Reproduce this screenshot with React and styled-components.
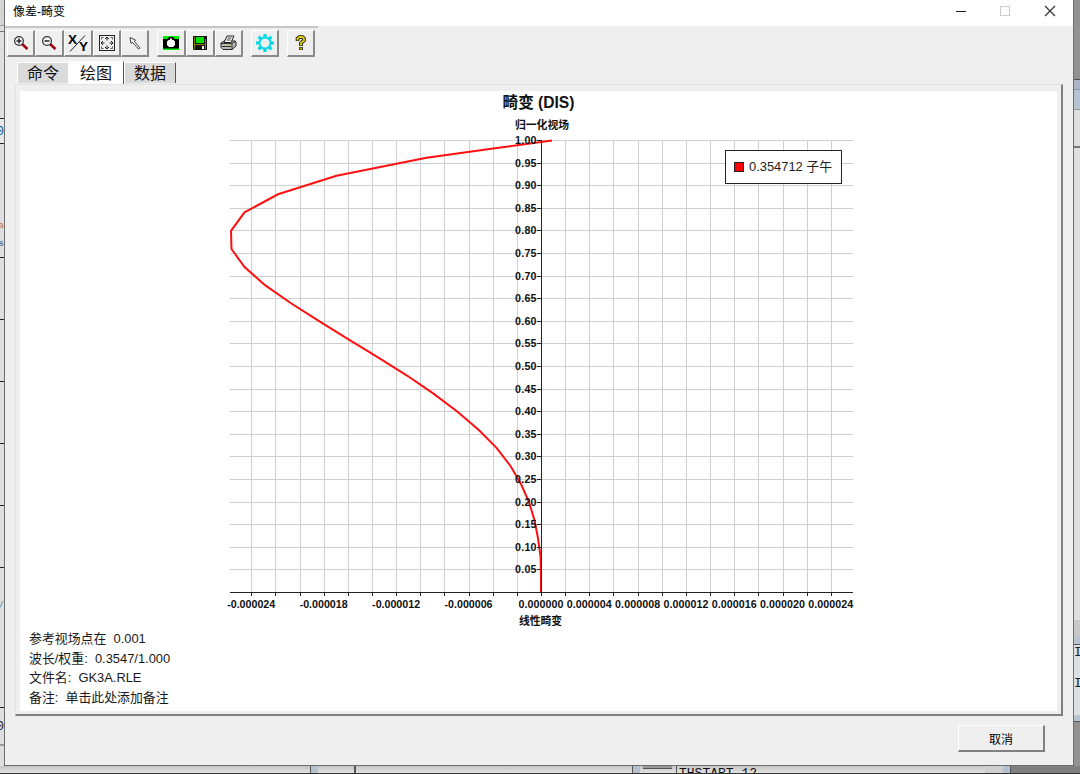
import React from 'react'
import styled, { createGlobalStyle } from 'styled-components'

const GlobalStyle = createGlobalStyle`
  * { box-sizing: border-box; }
  body {
    margin: 0;
    overflow: hidden;
    font-family: 'Liberation Sans', 'Noto Sans CJK SC', sans-serif;
  }
`

const Desktop = styled.div`
  width: 1080px;
  height: 774px;
  display: grid;
  grid-template-columns: 4px 1070px 6px;
  grid-template-rows: 766px 8px;
  background: #e4e4e4;
  overflow: hidden;
`

const Edge = styled.div`
  display: flex;
  flex-direction: column;
  overflow: hidden;
`

const Slice = styled.div`
  flex: none;
  height: ${p => p.h}px;
  background: ${p => p.bg || '#dedfe0'};
  border-bottom: ${p => p.line || 0}px solid ${p => p.lineColor || '#222'};
  color: ${p => p.ink || '#222'};
  font: ${p => p.size || 13}px/${p => p.h}px 'Liberation Mono', monospace;
  display: flex;
  justify-content: ${p => p.align || 'flex-end'};
  white-space: nowrap;
`

const Bottom = styled.div`
  grid-column: 1 / -1;
  display: flex;
  overflow: hidden;
  border-bottom: 1px solid #333;
`

const Strip = styled.div`
  flex: none;
  width: ${p => p.w}px;
  background: ${p => p.bg || 'linear-gradient(#c4c4c4, #e3e3e3)'};
  border-left: ${p => p.line || 0}px solid #555;
  color: #111;
  font: 13px/13px 'Liberation Mono', monospace;
  white-space: pre;
  overflow: hidden;
`

const ScrollThumb = styled.div`
  width: 29px;
  height: 3px;
  margin-left: 3px;
  background: #999;
  border-bottom: 1px solid #555;
`

const Code = styled.div`
  padding: 0 0 0 2px;
  margin-top: 1px;
`

const Window = styled.div`
  display: flex;
  flex-direction: column;
  background: #efefef;
  border: solid #6e6e6e;
  border-width: 0 1px 1px;
`

const TitleBar = styled.div`
  height: 26px;
  flex: none;
  display: flex;
  justify-content: space-between;
  background: #fff;
`

const Title = styled.div`
  padding-left: 8px;
  font-size: 12px;
  line-height: 25px;
  color: #000;
`

const Controls = styled.svg`
  width: 120px;
  height: 26px;
`

const Toolbar = styled.div`
  width: 313px;
  height: 34px;
  flex: none;
  display: flex;
  border-top: 2px solid #c6c6c6;
  padding: 2px 0 0 2px;
`

const Tool = styled.button`
  width: ${p => p.w || 28}px;
  height: 27px;
  margin: 0 ${p => p.gap || 0}px 0 0;
  padding: 0;
  display: flex;
  align-items: center;
  justify-content: center;
  background: #efefef;
  border: solid;
  border-width: 1px 2px 2px 1px;
  border-color: #fff #8a8a8a #8a8a8a #fff;

  svg { flex: none; display: block; }
`

const Tabs = styled.div`
  height: 24px;
  flex: none;
  display: flex;
  align-items: flex-end;
  padding-left: 12px;
`

const Tab = styled.div`
  width: ${p => p.w}px;
  height: ${p => (p.$active ? 23 : 21)}px;
  margin-bottom: ${p => (p.$active ? 0 : 1)}px;
  background: ${p => (p.$active ? '#fff' : '#dadada')};
  border-top: 1px solid #fff;
  border-left: 1px solid #fff;
  border-right: ${p => (p.edge ? 1 : 0)}px solid #555;
  font-size: 16px;
  line-height: ${p => (p.$active ? 23 : 21)}px;
  text-align: center;
  color: #111;
`

const Panel = styled.div`
  width: 1048px;
  height: 632px;
  flex: none;
  margin-left: 10px;
  padding: 6px 4px 3px;
  border: solid;
  border-width: 1px 2px 2px 1px;
  border-color: #e2e2e2 #808080 #808080 #e2e2e2;
`

const Sheet = styled.div`
  height: 620px;
  background: #fff;
  display: flex;
  flex-direction: column;
`

const Chart = styled.svg`
  width: 1039px;
  height: 538px;
  flex: none;
  display: block;
`

const Notes = styled.div`
  padding-left: 9px;
  color: #1a1a1a;
  font-size: 12.9px;
  line-height: 19.7px;
  white-space: pre;
`

const Footer = styled.div`
  flex: 1;
  display: flex;
  justify-content: flex-end;
  padding: 9px 28px 0 0;
`

const Button = styled.button`
  width: 87px;
  height: 27px;
  padding: 0;
  background: #efefef;
  border: solid;
  border-width: 1px 2px 2px 1px;
  border-color: #fff #808080 #808080 #fff;
  font: 12px 'Liberation Sans', 'Noto Sans CJK SC', sans-serif;
  color: #000;
`

const Magnifier = ({ plus }) => (
  <svg width="16" height="16" viewBox="0 0 16 16">
    <path d="M9 9l5.500 5" stroke="#a00012" strokeWidth="2.600" />
    <circle cx="6" cy="6" r="4.400" fill="#f6f6f6" stroke="#333" strokeWidth="1.200" />
    <path d={plus ? 'M3.500 6h5M6 3.500v5' : 'M3.500 6h5'} stroke="#222" strokeWidth="1.500" />
  </svg>
)

const AxisXY = () => (
  <svg width="24" height="22" viewBox="0 0 24 22" fontFamily="Liberation Sans" fontWeight="bold" fontSize="13.500">
    <text x="2" y="11.500">X</text>
    <text x="13" y="19">Y</text>
    <path d="M4 19.500L19 3.500" stroke="#222" strokeWidth="1" />
  </svg>
)

const Fit = () => (
  <svg width="18" height="18" viewBox="0 0 18 18" fill="none" stroke="#222">
    <rect x="1.500" y="1.500" width="15" height="15" />
    <path d="M9 3v3.500M9 11.500v3.500M3 9h3.500M11.500 9h3.500M7 5l2-2 2 2M7 13l2 2 2-2M5 7L3 9l2 2M13 7l2 2-2 2" />
    <path d="M3.500 5.500v-2h2M12.500 3.500h2v2M3.500 12.500v2h2M12.500 14.500h2v-2" strokeWidth="0.700" />
  </svg>
)

const Pointer = () => (
  <svg width="16" height="16" viewBox="0 0 16 16" fill="#eee" stroke="#333" strokeWidth="0.900">
    <path d="M3 2.500l1 6 1.500-1L11.500 14l1.500-1-5.500-6.500L8.500 5z" />
  </svg>
)

const Camera = () => (
  <svg width="16" height="16" viewBox="0 0 16 16">
    <rect y="1" width="16" height="14" fill="#00ef00" />
    <path d="M0 4h4l2-2h4l2 2h4v9.500H0z" fill="#000" />
    <path d="M7 3.500h2v1.500h1.500L12 6.500v3.500L10 12H6L4 10V6.500L5.500 5H7z" fill="#fff" />
  </svg>
)

const Disk = () => (
  <svg width="14" height="14" viewBox="0 0 14 14">
    <path d="M0 0h14v14H1L0 13z" fill="#111" />
    <path d="M3 1h8v6H3z" fill="#00e300" />
    <path d="M1 1h1v12H1zM12 3h1v10h-1zM2 8h10v1H2z" fill="#808000" />
    <path d="M9 10h2v3H9z" fill="#fff" />
  </svg>
)

const Printer = () => (
  <svg width="17" height="16" viewBox="0 0 17 16" stroke="#222">
    <path d="M1 8l3-2h11l1 1v4l-4 3.500H3l-2-2z" fill="#bbb" />
    <path d="M4 7.500L7 1h7l-3 6.500z" fill="#fff" />
    <path d="M7.500 3h4M6.500 5h4M1 8.500h11l4-2.500M12 8.500v6M2 11.500h9" fill="none" strokeWidth="0.900" />
    <path d="M8 10h2" stroke="#cc0" />
  </svg>
)

const Gear = () => (
  <svg width="18" height="18" viewBox="0 0 18 18" fill="none" stroke="#00dcec">
    <circle cx="9" cy="9" r="5.500" strokeWidth="2" />
    <path
      d="M9 0v3M9 15v3M0 9h3M15 9h3M2.600 2.600l2.200 2.200M13.200 13.200l2.200 2.200M2.600 15.400l2.200-2.200M13.200 4.800l2.200-2.200"
      strokeWidth="3.200"
    />
    <circle cx="9" cy="9" r="6.800" stroke="#356a70" strokeWidth="0.400" strokeDasharray="1 4.340" />
  </svg>
)

const Question = () => (
  <svg width="12" height="16" viewBox="0 0 12 16" fill="none">
    <path d="M2.500 6V3.500L4.500 2h3L9 3.500v2L6 8v3M6 12v3" stroke="#111" strokeWidth="3.600" />
    <path d="M2.500 5.500V3.500L4.500 2h3L9 3.500v2L6 8v2.500M6 12.500v2" stroke="#d8cf00" strokeWidth="1.900" />
  </svg>
)

// [distortion in px from the axis, normalised field]
const curve = [
  [10.5, 1], [-52, 0.981], [-115, 0.962], [-205, 0.922], [-263.5, 0.881], [-297, 0.841],
  [-310.5, 0.8], [-310, 0.76], [-297, 0.72], [-276.5, 0.68], [-250.5, 0.64],
  [-222, 0.6], [-193, 0.56], [-163.5, 0.52], [-134.5, 0.48], [-108, 0.44],
  [-84, 0.4], [-63, 0.36], [-45, 0.32], [-31, 0.28], [-20.5, 0.24],
  [-12.5, 0.2], [-7, 0.16], [-3.5, 0.12], [-1, 0.08], [-0.5, 0.04], [-0.5, 0]
]

const STEP_X = 24.15
const X0 = 541.5
const Y0 = 592.5
const toY = v => Y0 - v * 452

const columns = Array.from({ length: 25 }, (_, i) => i - 12)
const rows = Array.from({ length: 20 }, (_, i) => (i + 1) / 20)
const xLabels = [-24, -18, -12, -6, 0, 4, 8, 12, 16, 20, 24]

const Plot = () => (
  <Chart viewBox="20 91 1039 538" fontFamily="'Liberation Sans', 'Noto Sans CJK SC', sans-serif">
    <text x="538.5" y="107.5" textAnchor="middle" fontSize="15.6" fontWeight="bold" fill="#111">畸变 (DIS)</text>
    <text x="542" y="129" textAnchor="middle" fontSize="10.8" fontWeight="bold" fill="#111">归一化视场</text>
    <g stroke="#cfcfcf" shapeRendering="crispEdges">
      {rows.map(v => <path key={v} d={`M230 ${toY(v)}H853`} />)}
      {columns.map(i => <path key={i} d={`M${X0 + i * STEP_X} 140V592`} />)}
    </g>
    <polyline
      points={curve.map(([x, v]) => `${X0 + x},${toY(v)}`).join(' ')}
      fill="none"
      stroke="#ff1010"
      strokeWidth="2"
    />
    <g stroke="#222" shapeRendering="crispEdges">
      <path d={`M230 ${Y0}H853M${X0} 140V596`} />
      {rows.map(v => <path key={v} d={`M537 ${toY(v)}h4`} />)}
      {columns.map(i => <path key={i} d={`M${X0 + i * STEP_X} 592v4`} />)}
    </g>
    <g fontSize="10.7" fontWeight="bold" fill="#111">
      {rows.map(v => (
        <text key={v} x="536.5" y={toY(v) + 3.5} textAnchor="end" textLength="21.5">{v.toFixed(2)}</text>
      ))}
      {xLabels.map(n => (
        <text key={n} x={X0 - 0.5 + (n / 2) * STEP_X} y="607.5" textAnchor="middle" textLength={n < 0 ? 48 : 45}>
          {(n / 1e6).toFixed(6)}
        </text>
      ))}
      <text x="540.5" y="625" textAnchor="middle" fontSize="10.8">线性畸变</text>
    </g>
    {/* the trace stays visible beside the axis near zero distortion */}
    <path d="M540.5 556V592" stroke="#ff1010" />
    <rect x="725.5" y="150.5" width="116" height="33" fill="#fff" stroke="#222" />
    <rect x="734.5" y="162.5" width="9" height="9" fill="#f00" stroke="#222" />
    <text x="749" y="171" fontSize="12.9" fill="#222">0.354712 子午</text>
  </Chart>
)

const App = () => (
  <>
    <GlobalStyle />
    <Desktop>
      <Edge>
        <Slice h={26} bg="#d5d5d5" line={1} lineColor="#999" />
        <Slice h={6} line={1} lineColor="#777" />
        <Slice h={87} line={1} />
        <Slice h={25} line={1} bg="#e8e8e8" ink="#075a9c">0</Slice>
        <Slice h={78} ink="#c87030" size={9} />
        <Slice h={8} ink="#c87030" size={9}>a</Slice>
        <Slice h={28} line={1} ink="#234e80" size={9}>s</Slice>
        {[0, 1, 2, 3, 4].map(i => <Slice key={i} h={62} line={1} />)}
        <Slice h={76} ink="#46869c" size={9}>/</Slice>
        <Slice h={64} line={1} />
        <Slice h={38} line={2} lineColor="#999">0</Slice>
        <Slice h={22} bg="#dedede" />
      </Edge>
      <Window>
        <TitleBar>
          <Title>像差-畸变</Title>
          <Controls viewBox="0 0 120 26" fill="none">
            <path d="M3 11.5h10" stroke="#222" />
            <rect x="47.5" y="6.5" width="9" height="9" stroke="#ccc" />
            <path d="M92 6l10 10M102 6l-10 10" stroke="#333" strokeWidth="1.2" />
          </Controls>
        </TitleBar>
        <Toolbar>
          <Tool><Magnifier plus /></Tool>
          <Tool w={29}><Magnifier /></Tool>
          <Tool w={29}><AxisXY /></Tool>
          <Tool w={28}><Fit /></Tool>
          <Tool gap={8}><Pointer /></Tool>
          <Tool w={29}><Camera /></Tool>
          <Tool w={29}><Disk /></Tool>
          <Tool gap={8}><Printer /></Tool>
          <Tool gap={8}><Gear /></Tool>
          <Tool><Question /></Tool>
        </Toolbar>
        <Tabs>
          <Tab w={51}>命令</Tab>
          <Tab w={56} $active edge>绘图</Tab>
          <Tab w={52} edge>数据</Tab>
        </Tabs>
        <Panel>
          <Sheet>
            <Plot />
            <Notes>
              <div>参考视场点在  0.001</div>
              <div>波长/权重:  0.3547/1.000</div>
              <div>文件名:  GK3A.RLE</div>
              <div>备注:  单击此处添加备注</div>
            </Notes>
          </Sheet>
        </Panel>
        <Footer>
          <Button>取消</Button>
        </Footer>
      </Window>
      <Edge>
        <Slice h={80} bg="#929292" line={1} lineColor="#555" />
        <Slice h={10} bg="#a9b5c2" line={1} lineColor="#8a97a5" />
        <Slice h={20} bg="#b6c3d1" line={1} lineColor="#999" />
        <Slice h={38} bg="#dedede" line={2} lineColor="#777" />
        <Slice h={472} bg="#dedede" />
        <Slice h={17} bg="#c8c8c8" />
        <Slice h={8} bg="#b7c4d3" line={1} lineColor="#555" />
        <Slice h={16} align="flex-start">I</Slice>
        <Slice h={46} align="flex-start">I</Slice>
        <Slice h={8} />
        <Slice h={7} bg="#b7c4d3" line={1} lineColor="#555" />
        <Slice h={44} bg="#929292" />
      </Edge>
      <Bottom>
        <Strip w={310} />
        <Strip w={8} line={1} bg="#b4c0ce" />
        <Strip w={36} />
        <Strip w={278} line={2} />
        <Strip w={8} line={1} bg="#b4c0ce" />
        <Strip w={36}><ScrollThumb /></Strip>
        <Strip w={309} line={1}><Code>THSTART 12</Code></Strip>
        <Strip w={18} bg="#cfcfcf" />
        <Strip w={7} bg="#b4c0ce" />
        <Strip w={70} line={1} bg="#808080" />
      </Bottom>
    </Desktop>
  </>
)

export default App
